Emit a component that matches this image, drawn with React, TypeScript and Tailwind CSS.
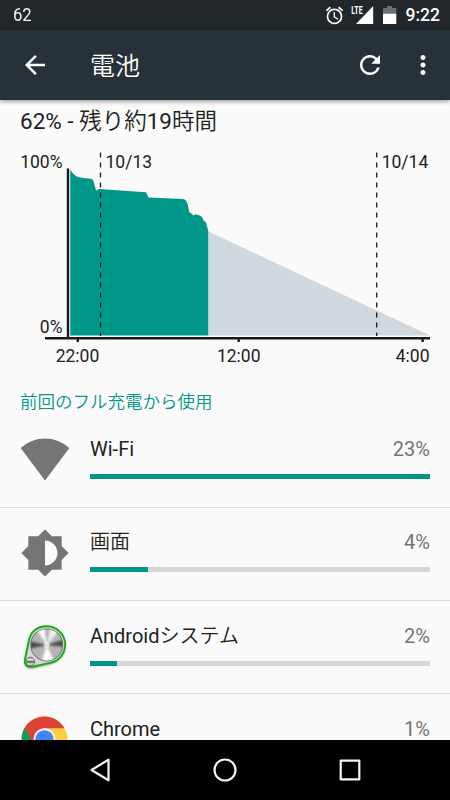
import type { ReactNode } from "react";
import { MdArrowBack, MdBrightness6, MdMoreVert, MdOutlineAlarm, MdRefresh } from "react-icons/md";

type UsageItem = {
  name: string;
  percent: string;
  width: number;
  icon: ReactNode;
};

function WifiIcon() {
  return (
    <svg width="50" height="50" viewBox="0 0 50 50">
      <path d="M.7 12a36 36 0 0 1 48.600 0L25.600 43.800q-.6.8-1.200 0Z" fill="#757575" />
    </svg>
  );
}

function SystemIcon() {
  return (
    <svg width="50" height="50" viewBox="0 0 50 50">
      <defs>
        <linearGradient id="shine" x1="0" y1="0" x2="0" y2="1">
          <stop offset="0" stopColor="#777" />
          <stop offset=".3" stopColor="#eee" />
          <stop offset=".55" stopColor="#555" />
          <stop offset=".8" stopColor="#eee" />
          <stop offset="1" stopColor="#777" />
        </linearGradient>
        <filter id="soft" x="-20%" y="-20%" width="140%" height="140%">
          <feGaussianBlur stdDeviation="1.3" />
        </filter>
        <clipPath id="knob">
          <circle cx="26.700" cy="22.900" r="15.600" />
        </clipPath>
      </defs>
      <path
        d="M8.500 19.500C10.500 10 18 5.500 27 5.500a18.500 18.500 0 0 1 3.500 36.500L14 46C7 47.500 4 43.500 5 38.500Z"
        fill="#444"
        opacity=".7"
        filter="url(#soft)"
      />
      <path
        d="M8.800 19C10.500 9.500 17.500 4.200 26.500 4.200a18.500 18.500 0 0 1 3.500 36.700L12.500 44.600C7 45.700 4 42.300 5 37.500Z"
        fill="#d8d8d8"
        stroke="#10b010"
        strokeWidth="1.900"
      />
      <circle cx="26.700" cy="22.900" r="16.500" fill="#777" />
      <g clipPath="url(#knob)">
        <circle cx="26.700" cy="22.900" r="15.600" fill="#b4b4b4" />
        <g filter="url(#soft)">
          <path d="M26.700 22.900 9 19v8ZM26.700 22.900 45 17v8Z" fill="#505050" />
          <path d="M26.700 22.900 15 5l9-1ZM26.700 22.900 21 42h14Z" fill="#fff" />
          <path d="M26.700 22.900 31 4l8 5Z" fill="#f0f0f0" />
        </g>
        <circle cx="26.700" cy="22.900" r="3" fill="#fff" opacity=".5" />
      </g>
      <circle cx="10.400" cy="39.500" r="4.300" fill="url(#shine)" stroke="#666" strokeWidth=".8" />
    </svg>
  );
}

function ChromeIcon() {
  return (
    <svg width="50" height="50" viewBox="0 0 50 50">
      <circle cx="24.500" cy="24.200" r="23" fill="#ffcd40" />
      <path d="M24.500 24.200 4.600 12.700A23 23 0 0 0 24.500 47.200L34.500 29.700Z" fill="#0f9d58" />
      <path d="M4.600 12.700a23 23 0 0 1 39.800 0.500H24.500L14.500 29.700Z" fill="#db4437" />
      <circle cx="24.500" cy="24.200" r="11" fill="#f1f1f1" />
      <circle cx="24.500" cy="24.200" r="9" fill="#4285f4" />
    </svg>
  );
}

const usage: UsageItem[] = [
  { name: "Wi-Fi", percent: "23%", width: 100, icon: <WifiIcon /> },
  { name: "画面", percent: "4%", width: 17, icon: <MdBrightness6 className="mb-[2px] size-[50px] text-[#757575]" /> },
  { name: "Androidシステム", percent: "2%", width: 8, icon: <SystemIcon /> },
  { name: "Chrome", percent: "1%", width: 4, icon: <ChromeIcon /> },
];

function StatusBar() {
  return (
    <div className="flex h-[30px] shrink-0 items-center bg-[#21272b] pr-[10px] pl-[13px] text-white">
      <span className="origin-left scale-x-90 pt-px text-[18.500px] leading-none text-gray-100">62</span>
      <MdOutlineAlarm className="ml-auto size-[21px]" />
      <svg width="24" height="20" viewBox="0 0 24 20" className="ml-[5px]">
        <path d="M23.200 1v18H6Z" fill="#fff" />
        <path d="M0 0h13.500v10H0Z" fill="#21272b" />
        <text x="1.200" y="9.200" fontSize="11" fontWeight="700" fill="#fff" textLength="11.500" lengthAdjust="spacingAndGlyphs">
          LTE
        </text>
      </svg>
      <svg width="14" height="20" viewBox="0 0 14 20" className="ml-[9px]">
        <path d="M0 3h4V1h5v2h4.300v6H0Z" fill="#6b6f72" />
        <path d="M0 8.700h13.300V19H0Z" fill="#fff" />
      </svg>
      <span className="ml-[8.500px] pt-px text-[17.500px] font-medium">9:22</span>
    </div>
  );
}

function AppBar() {
  return (
    <header className="relative flex h-[70px] shrink-0 items-center bg-[#263238] pr-[12px] pl-5 text-white shadow-[0_1px_5px_rgba(0,0,0,0.45)]">
      <MdArrowBack className="size-[30px]" />
      <h1 className="ml-10 pt-[3px] text-[25px]">電池</h1>
      <MdRefresh className="ml-auto size-[30px]" />
      <MdMoreVert className="ml-[23px] size-[30px]" />
    </header>
  );
}

function BatteryChart() {
  return (
    <svg width="450" height="235" viewBox="0 140 450 235" className="block shrink-0" fontSize="17.500" fill="#212121">
      <path d="M208.500 231.500 430 335.500H208.500Z" fill="#cfd8dc" />
      <path
        d="M70.300 169.500Q74 176.500 80 177.500L92 179Q93.500 179.500 96 190.500L99 189 146 192.300 148.500 197.500 183 199Q186.500 199.500 187.500 204L189.500 212.500 191.500 213.500 193.500 215.500 195 214.200 200 215.500Q202.500 216.500 203.500 220.500L206 222.500 208.300 231V335.500H70.300Z"
        fill="#009688"
      />
      <path d="M68 168.500V338M45 338.200H430M77.800 338v4M238.700 338v4M422.600 338v4" stroke="#171c1b" strokeWidth="2.400" />
      <path d="M100.500 152.500V336M376.700 152.500V336" stroke="#171c1b" strokeWidth="1.300" strokeDasharray="5 5" />
      <text x="62.500" y="168.300" textAnchor="end">100%</text>
      <text x="62.500" y="333.300" textAnchor="end">0%</text>
      <text x="105.500" y="168.300">10/13</text>
      <text x="381.700" y="168.300">10/14</text>
      <text x="77.500" y="361.700" textAnchor="middle">22:00</text>
      <text x="238.700" y="361.700" textAnchor="middle">12:00</text>
      <text x="429.500" y="361.700" textAnchor="end">4:00</text>
    </svg>
  );
}

function UsageRow({ item }: { item: UsageItem }) {
  return (
    <li className="flex h-[93.300px] shrink-0 items-center border-b border-[#dcdcdc] px-5">
      <div className="w-[70px] shrink-0">{item.icon}</div>
      <div className="flex-1 pb-[8px]">
        <div className="flex h-[30px] items-center justify-between text-[20px] leading-[30px]">
          <span className="text-[#212121]">{item.name}</span>
          <span className="text-[#757575]">{item.percent}</span>
        </div>
        <div className="mt-[10px] h-[5px] bg-[#d6d6d6]">
          <div className="h-full bg-[#009688]" style={{ width: `${item.width}%` }} />
        </div>
      </div>
    </li>
  );
}

function NavBar() {
  return (
    <nav className="flex h-[60px] shrink-0 items-center justify-between bg-black px-[85px]">
      <svg width="30" height="30" viewBox="0 0 30 30" fill="none" stroke="#f5f5f5" strokeWidth="2.200" strokeLinejoin="round">
        <path d="M6.500 15 23.500 4.700v20.600Z" />
      </svg>
      <svg width="30" height="30" viewBox="0 0 30 30" fill="none" stroke="#f5f5f5" strokeWidth="2.200">
        <circle cx="15" cy="15" r="10.500" />
      </svg>
      <svg width="30" height="30" viewBox="0 0 30 30" fill="none" stroke="#f5f5f5" strokeWidth="2.200" strokeLinejoin="round">
        <path d="M5.700 5.700h18.600v18.600H5.700Z" />
      </svg>
    </nav>
  );
}

function App() {
  return (
    <div
      lang="ja"
      className="flex h-[800px] w-[450px] flex-col overflow-hidden bg-[#fafafa] font-[Roboto,'Noto_Sans_CJK_JP_DemiLight','Noto_Sans_CJK_JP',sans-serif]"
    >
      <StatusBar />
      <AppBar />
      <main className="flex min-h-0 flex-1 flex-col overflow-hidden">
        <p className="flex h-10 shrink-0 items-center px-5 pt-[4px] text-[22.500px] text-[#212121]">62% - 残り約19時間</p>
        <BatteryChart />
        <h2 className="flex h-[39.400px] shrink-0 items-end px-5 text-[17.500px] leading-[24px] text-[#009688]">
          前回のフル充電から使用
        </h2>
        <ul className="flex flex-col">
          {usage.map((item) => (
            <UsageRow key={item.name} item={item} />
          ))}
        </ul>
      </main>
      <NavBar />
    </div>
  );
}

export default App;
